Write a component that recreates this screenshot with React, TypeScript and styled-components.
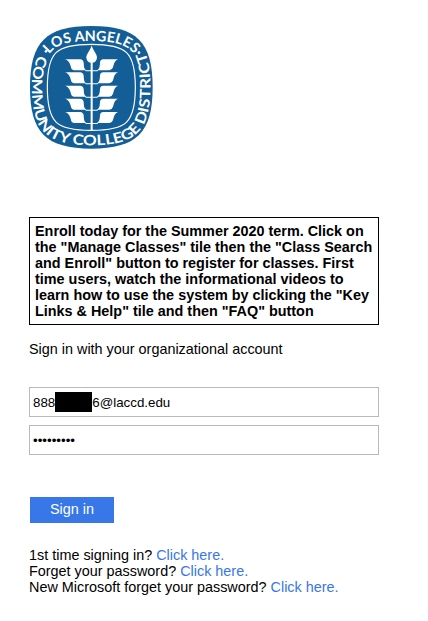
import React from "react";
import styled, { createGlobalStyle } from "styled-components";

const GlobalStyle = createGlobalStyle`
  body {
    margin: 0;
    background: #fff;
    color: #000;
    font-family: "Liberation Sans", Arial, sans-serif;
    font-size: 14.4px;
    line-height: 16px;
  }
`;

const Page = styled.main`
  display: flex;
  flex-direction: column;
  align-items: flex-start;
  width: 350px;
  padding: 26px 0 0 29px;
`;

const Logo = styled.svg`
  display: block;
  width: 123px;
  height: 123px;
  margin: 0 0 68px 1px;
`;

const Notice = styled.div`
  box-sizing: border-box;
  width: 350px;
  padding: 5px;
  border: 1px solid #000;
  font-weight: bold;
`;

const Prompt = styled.div`
  margin: 16px 0 30px;
`;

const Form = styled.form`
  display: flex;
  flex-direction: column;
  align-items: flex-start;
  gap: 8px;
`;

const Field = styled.div`
  box-sizing: border-box;
  display: flex;
  align-items: center;
  width: 350px;
  height: 30px;
  padding: 2px 3px 0;
  border: 1px solid #bababa;
  font-size: 13.333px;
`;

const Redaction = styled.span`
  width: 37px;
  height: 20px;
  margin-bottom: 2px;
  background: #000;
`;

const Submit = styled.button`
  width: 84px;
  height: 26px;
  margin: 34px 0 0 1px;
  padding: 0 0 2px;
  border: 0;
  background: #3777e8;
  color: #fff;
  font: inherit;
`;

const Links = styled.div`
  margin-top: 24px;
  white-space: nowrap;
`;

const Link = styled.a`
  color: #3777e8;
  text-decoration: none;
`;

const helpLinks = ["1st time signing in?", "Forget your password?", "New Microsoft forget your password?"];
const leafRows = [0, 39, 79, 118, 158];

function Seal() {
  return (
    <Logo viewBox="18 18 369 369" role="img" aria-label="Los Angeles Community College District">
      <defs>
        <path id="upper" d="M53 202C53 88 94 63 202 63S354 88 354 202" />
        <path
          id="lower"
          d="M202 28C84 28 24 84 24 202C24 335 70 376 202 376S379 335 379 202C379 72 342 28 202 28"
        />
      </defs>
      <path fill="#135e96" d="M202 18C338 18 386 66 386 202S338 386 202 386S18 338 18 202S66 18 202 18Z" />
      <path
        fill="none"
        stroke="#fff"
        strokeWidth="3.5"
        d="M202 73C308 73 334 96 334 202S308 331 202 331S70 308 70 202S96 73 202 73Z"
      />
      <g fill="#fff" fontFamily="Lato, sans-serif" fontWeight="700" fontSize="43">
        <text textAnchor="middle" textLength="277" lengthAdjust="spacingAndGlyphs">
          <textPath href="#upper" startOffset="50%">LOS ANGELES</textPath>
        </text>
        <text textAnchor="middle" textLength="792" lengthAdjust="spacingAndGlyphs">
          <textPath href="#lower" startOffset="50%">COMMUNITY COLLEGE DISTRICT</textPath>
        </text>
      </g>
      <g fill="#fff">
        <circle cx="66" cy="94" r="4" />
        <circle cx="345" cy="98" r="4" />
        <path d="M203 76C207 92 219 102 219 113Q217 126 206 128V332H200V128Q189 126 187 113C187 102 199 92 203 76Z" />
        {leafRows.map((y) => (
          <g key={y} transform={`translate(0 ${y})`}>
            <path d="M123 118H168Q178 119 179 128C180 142 180 146 187 151H203V154H186L183 151H151Q142 150 141 142C139 134 136 122 123 118Z" />
            <path d="M283 118H238Q228 119 228 128C227 142 226 146 219 151H203V154H220L223 151H256Q265 150 267 142C270 134 270 122 283 118Z" />
          </g>
        ))}
      </g>
    </Logo>
  );
}

export default function App() {
  return (
    <>
      <GlobalStyle />
      <Page>
        <Seal />
        <Notice>
          Enroll today for the Summer 2020 term. Click on the "Manage Classes" tile then the "Class Search and
          Enroll" button to register for classes. First time users, watch the informational videos to learn how to
          use the system by clicking the "Key Links &amp; Help" tile and then "FAQ" button
        </Notice>
        <Prompt>Sign in with your organizational account</Prompt>
        <Form>
          <Field>
            888
            <Redaction />
            6@laccd.edu
          </Field>
          <Field>•••••••••</Field>
          <Submit type="button">Sign in</Submit>
        </Form>
        <Links>
          {helpLinks.map((label) => (
            <div key={label}>
              {label} <Link href="#">Click here.</Link>
            </div>
          ))}
        </Links>
      </Page>
    </>
  );
}
